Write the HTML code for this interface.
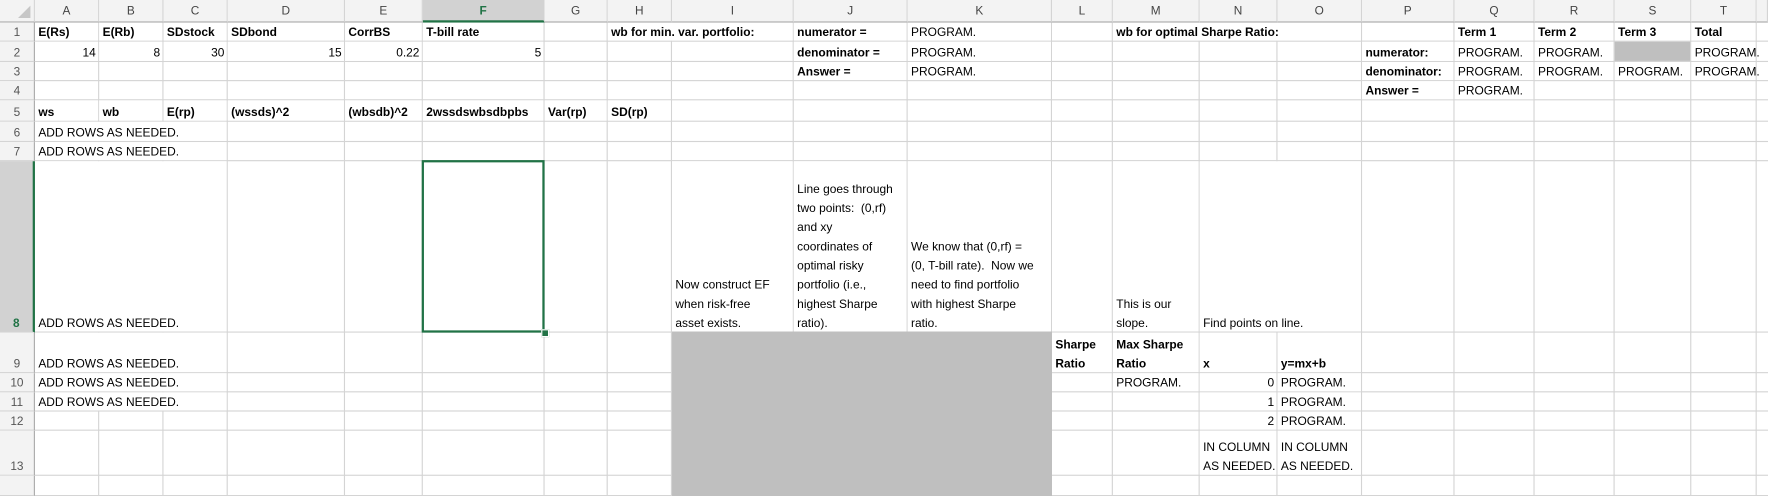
<!DOCTYPE html>
<html><head><meta charset="utf-8"><style>
html,body{margin:0;padding:0;background:#fff;overflow:hidden;width:1768px;height:478px}
#w{position:absolute;left:0;top:0;width:1568px;height:424px;transform:scale(1.12755);transform-origin:0 0;font-family:"Liberation Sans",sans-serif;font-size:10.6px;color:#000}
.v{position:absolute;width:1px;background:#d4d4d4}
.h{position:absolute;height:1px;background:#d4d4d4}
.c{position:absolute;display:flex;align-items:flex-end;white-space:nowrap;padding:0 3px 0 3px;box-sizing:border-box;line-height:17px;background:#fff;overflow:visible}
.c>div{position:relative;top:2px}
.r{justify-content:flex-end;padding-right:2px}
.b{font-weight:bold}
.hd{position:absolute;top:0;height:20px;background:#f3f3f3;color:#444;text-align:center;line-height:21px;font-size:10.5px;border-right:1px solid #d4d4d4;box-sizing:border-box;border-bottom:1px solid #ababab}
.rh{position:absolute;left:0;width:31px;background:#f3f3f3;color:#555;text-align:center;font-size:10.5px;display:flex;align-items:flex-end;justify-content:center;box-sizing:border-box;border-bottom:1px solid #d4d4d4;border-right:1px solid #ababab;padding-bottom:1px}
</style></head><body><div id="w"></div>
<script>
var X=[31,88,145,202,306,375,483,539,596,704,805,933,987,1064,1133,1208,1290,1361,1432,1500,1558];
var Y=[20,37,55,72,89,108,126,143,295,331,348,365,382,422,440];
var L="ABCDEFGHIJKLMNOPQRST";
var w=document.getElementById('w'),h='';
for(var i=0;i<X.length;i++)h+='<div class="v" style="left:'+(X[i]-1)+'px;top:20px;height:420px"></div>';
for(var j=0;j<Y.length;j++)h+='<div class="h" style="top:'+(Y[j]-1)+'px;left:31px;width:1537px"></div>';
h+='<div style="position:absolute;left:596px;top:294px;width:337px;height:146px;background:#bfbfbf"></div>';
h+='<div style="position:absolute;left:1432px;top:37px;width:67px;height:17px;background:#bfbfbf"></div>';
function c(col,row,txt,cls,span){var a=L.indexOf(col),x=X[a],x2=X[a+(span||1)];var y=Y[row-1],y2=Y[row];
h+='<div class="c '+(cls||'')+'" style="left:'+x+'px;top:'+y+'px;width:'+(x2-x-1)+'px;height:'+(y2-y-1)+'px"><div>'+txt+'</div></div>';}
c('A',1,'E(Rs)','b');c('B',1,'E(Rb)','b');c('C',1,'SDstock','b');c('D',1,'SDbond','b');c('E',1,'CorrBS','b');c('F',1,'T-bill rate','b');
c('H',1,'wb for min. var. portfolio:','b',2);c('J',1,'numerator =','b');c('K',1,'PROGRAM.');c('M',1,'wb for optimal Sharpe Ratio:','b',3);
c('Q',1,'Term 1','b');c('R',1,'Term 2','b');c('S',1,'Term 3','b');c('T',1,'Total','b');
c('A',2,'14','r');c('B',2,'8','r');c('C',2,'30','r');c('D',2,'15','r');c('E',2,'0.22','r');c('F',2,'5','r');
c('J',2,'denominator =','b');c('K',2,'PROGRAM.');c('P',2,'numerator:','b');c('Q',2,'PROGRAM.');c('R',2,'PROGRAM.');c('T',2,'PROGRAM.');
c('J',3,'Answer =','b');c('K',3,'PROGRAM.');c('P',3,'denominator:','b');c('Q',3,'PROGRAM.');c('R',3,'PROGRAM.');c('S',3,'PROGRAM.');c('T',3,'PROGRAM.');
c('P',4,'Answer =','b');c('Q',4,'PROGRAM.');
c('A',5,'ws','b');c('B',5,'wb','b');c('C',5,'E(rp)','b');c('D',5,'(wssds)^2','b');c('E',5,'(wbsdb)^2','b');c('F',5,'2wssdswbsdbpbs','b');c('G',5,'Var(rp)','b');c('H',5,'SD(rp)','b');
c('A',6,'ADD ROWS AS NEEDED.','',3);c('A',7,'ADD ROWS AS NEEDED.','',3);c('A',8,'ADD ROWS AS NEEDED.','',3);
c('I',8,'Now construct EF<br>when risk-free<br>asset exists.');
c('J',8,'Line goes through<br>two points:&nbsp; (0,rf)<br>and xy<br>coordinates of<br>optimal risky<br>portfolio (i.e.,<br>highest Sharpe<br>ratio).');
c('K',8,'We know that (0,rf) =<br>(0, T-bill rate).&nbsp; Now we<br>need to find portfolio<br>with highest Sharpe<br>ratio.');
c('M',8,'This is our<br>slope.');c('N',8,'Find points on line.','',2);
c('A',9,'ADD ROWS AS NEEDED.','',3);c('A',10,'ADD ROWS AS NEEDED.','',3);c('A',11,'ADD ROWS AS NEEDED.','',3);
c('L',9,'Sharpe<br>Ratio','b');c('M',9,'Max Sharpe<br>Ratio','b');c('N',9,'x','b');c('O',9,'y=mx+b','b');
c('M',10,'PROGRAM.');c('N',10,'0','r');c('O',10,'PROGRAM.');c('N',11,'1','r');c('O',11,'PROGRAM.');c('N',12,'2','r');c('O',12,'PROGRAM.');
c('N',13,'IN COLUMN<br>AS NEEDED.');c('O',13,'IN COLUMN<br>AS NEEDED.');
h+='<div class="hd" style="left:0;width:31px;background:#f3f3f3"><div style="position:absolute;right:3px;bottom:3px;width:0;height:0;border-left:11px solid transparent;border-bottom:11px solid #c6c6c6"></div></div>';
for(var i=0;i<20;i++){var s=(i==5);h+='<div class="hd" style="left:'+X[i]+'px;width:'+(X[i+1]-X[i])+'px;'+(s?'background:#d2d2d2;color:#217346;font-weight:bold;border-bottom:2px solid #217346':'')+'">'+L[i]+'</div>';}
h+='<div class="hd" style="left:1558px;width:10px"></div>';
for(var j=0;j<14;j++){var s=(j==7);h+='<div class="rh" style="top:'+Y[j]+'px;height:'+(Y[j+1]-Y[j])+'px;'+(s?'background:#d2d2d2;color:#217346;font-weight:bold;border-right:2px solid #217346':'')+'">'+(j+1)+'</div>';}
h+='<div class="rh" style="top:422px;height:18px"></div>';
h+='<div style="position:absolute;left:374px;top:142px;width:109px;height:153px;border:2px solid #217346;box-sizing:border-box"></div>';
h+='<div style="position:absolute;left:480px;top:292px;width:5px;height:5px;background:#217346;border:1px solid #fff"></div>';
w.innerHTML=h;
</script></body></html>
